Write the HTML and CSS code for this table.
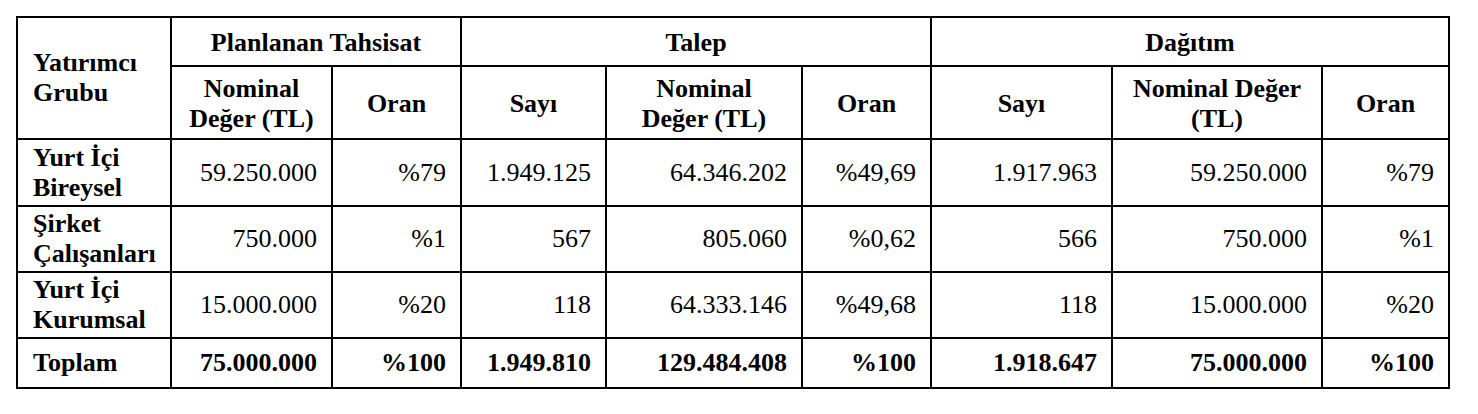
FILE: index.html
```html
<!DOCTYPE html>
<html lang="tr">
<head>
<meta charset="utf-8">
<title>Dagitim</title>
<link rel="stylesheet" href="styles.css">
</head>
<body>
<table class="alloc">
  <colgroup>
    <col class="c1"><col class="c2"><col class="c3"><col class="c4"><col class="c5"><col class="c6"><col class="c7"><col class="c8"><col class="c9">
  </colgroup>
  <thead>
    <tr class="r-h1">
      <th class="left" rowspan="2">Yatırımcı<br>Grubu</th>
      <th colspan="2">Planlanan Tahsisat</th>
      <th colspan="3">Talep</th>
      <th colspan="3">Dağıtım</th>
    </tr>
    <tr class="r-h2">
      <th>Nominal<br>Değer (TL)</th>
      <th>Oran</th>
      <th>Sayı</th>
      <th>Nominal<br>Değer (TL)</th>
      <th>Oran</th>
      <th>Sayı</th>
      <th>Nominal Değer<br>(TL)</th>
      <th>Oran</th>
    </tr>
  </thead>
  <tbody>
    <tr class="r-d1">
      <th class="left">Yurt İçi<br>Bireysel</th>
      <td>59.250.000</td><td>%79</td><td>1.949.125</td><td>64.346.202</td><td>%49,69</td><td>1.917.963</td><td>59.250.000</td><td>%79</td>
    </tr>
    <tr class="r-d2">
      <th class="left">Şirket<br>Çalışanları</th>
      <td>750.000</td><td>%1</td><td>567</td><td>805.060</td><td>%0,62</td><td>566</td><td>750.000</td><td>%1</td>
    </tr>
    <tr class="r-d3">
      <th class="left">Yurt İçi<br>Kurumsal</th>
      <td>15.000.000</td><td>%20</td><td>118</td><td>64.333.146</td><td>%49,68</td><td>118</td><td>15.000.000</td><td>%20</td>
    </tr>
    <tr class="r-total">
      <th class="left">Toplam</th>
      <td>75.000.000</td><td>%100</td><td>1.949.810</td><td>129.484.408</td><td>%100</td><td>1.918.647</td><td>75.000.000</td><td>%100</td>
    </tr>
  </tbody>
</table>
</body>
</html>
```

FILE: styles.css
```css
html, body {
  margin: 0;
  padding: 0;
  background: #ffffff;
}

body {
  padding: 16px 0 0 16px;
  font-family: "Liberation Serif", serif;
  color: #000000;
}

.alloc {
  border-collapse: collapse;
  table-layout: fixed;
  width: 1434px;
  font-family: "Liberation Serif", serif;
  font-size: 26px;
  line-height: 30px;
}

.alloc th,
.alloc td {
  border: 2px solid #000000;
  padding: 0;
  vertical-align: middle;
  font-family: "Liberation Serif", serif;
}

.alloc th {
  font-weight: bold;
  text-align: center;
  padding: 2px 6px 0;
}

.alloc th.left {
  text-align: left;
  padding: 0 4px 0 15px;
}

.alloc td {
  font-weight: normal;
  text-align: right;
  padding: 0 14px 0 4px;
}

.alloc .r-total td {
  font-weight: bold;
}

.c1 { width: 154px; }
.c2 { width: 161px; }
.c3 { width: 129px; }
.c4 { width: 145px; }
.c5 { width: 196px; }
.c6 { width: 129px; }
.c7 { width: 181px; }
.c8 { width: 210px; }
.c9 { width: 127px; }

.r-h1 { height: 49px; }
.r-h2 { height: 73px; }
.r-d1 { height: 67px; }
.r-d2 { height: 66px; }
.r-d3 { height: 66px; }
.r-total { height: 50px; }
```
